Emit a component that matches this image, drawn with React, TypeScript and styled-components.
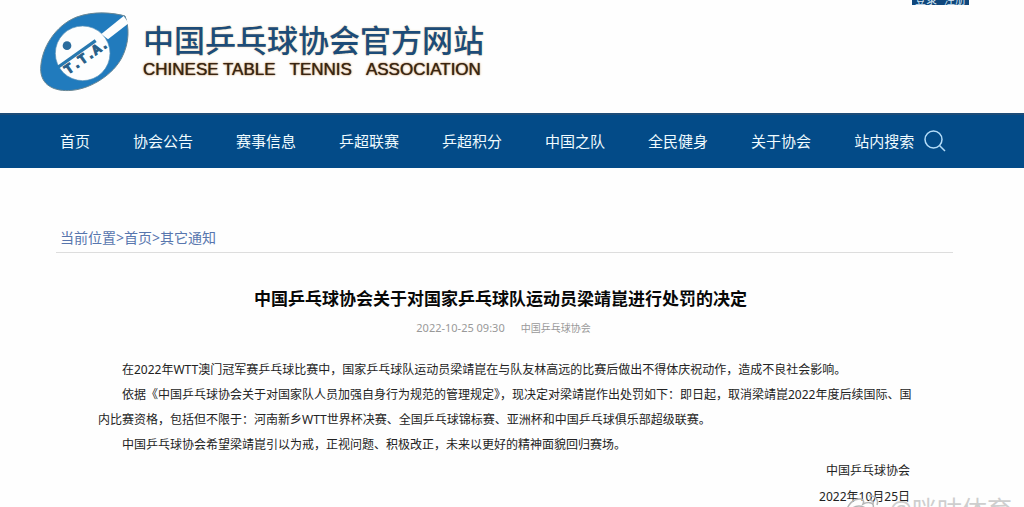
import React from "react";
import styled, { createGlobalStyle } from "styled-components";

const Global = createGlobalStyle`
  * { box-sizing: border-box; }
  body {
    margin: 0;
    background: #fefefe;
    color: #222;
    font-family: "Noto Sans", "Noto Sans CJK SC", sans-serif;
  }
  a { color: inherit; text-decoration: none; }
`;

const Page = styled.div`
  position: relative;
  height: 100vh;
  overflow: hidden;
`;

const Header = styled.header`
  display: flex;
  justify-content: space-between;
  align-items: flex-start;
  height: 113px;
  padding: 0 55px 0 38px;
`;

const Brand = styled.a`
  display: flex;
  gap: 14px;
  padding-top: 11px;
`;

const BrandText = styled.div`
  display: flex;
  flex-direction: column;
  gap: 3px;
  padding-top: 11px;
`;

const BrandName = styled.span`
  font: 500 31px/34px "Noto Sans CJK SC", sans-serif;
  color: #1d4c78;
  text-shadow: 0 0 2px #e8cfa0;
`;

const BrandLatin = styled.span`
  display: flex;
  gap: 14px;
  font: 17px/22px "Liberation Sans", sans-serif;
  color: #3a2410;
  text-shadow: 0 0 1px #3a2410, 0 0 3px #f2b880;
`;

const Account = styled.div`
  display: flex;
  gap: 7px;
  height: 5px;
  padding: 0 3px;
  overflow: hidden;
  background: #10477c;
  color: #d5e6f4;
  font-size: 11px;
  line-height: 16px;
  a { margin-top: -8px; }
`;

const Nav = styled.nav`
  display: flex;
  align-items: center;
  gap: 43px;
  height: 55px;
  padding: 0 60px 2px;
  background: #034b88;
  border-top: 2px solid #1d4c78;
  color: #f0fbff;
  font-size: 15px;
  line-height: 24px;
  white-space: nowrap;
`;

const SearchGroup = styled.div`
  display: flex;
  align-items: center;
  gap: 10px;
`;

const SearchButton = styled.button`
  display: flex;
  padding: 0;
  border: 0;
  background: none;
  color: #b4dcf8;
`;

const Main = styled.main`
  padding: 56px 71px 0 56px;
`;

const Breadcrumb = styled.div`
  padding: 3px 4px 4px;
  border-bottom: 1px solid #ddd;
  color: #5876ae;
  font-size: 14px;
  line-height: 21px;
`;

const Article = styled.article`
  padding: 34px 34px 0 42px;
`;

const Heading = styled.header`
  padding-right: 16px;
`;

const Title = styled.h1`
  margin: 0;
  color: #080808;
  text-align: center;
  font-size: 17px;
  line-height: 24px;
`;

const Meta = styled.div`
  display: flex;
  justify-content: center;
  align-items: center;
  gap: 16px;
  padding: 9px 0 0 6px;
  color: #999;
  font-size: 10px;
  line-height: 16px;
  time { font-size: 11px; }
`;

const Body = styled.div`
  padding-top: 21px;
  font-size: 12px;
  line-height: 25px;
`;

const Paragraph = styled.p`
  margin: 0;
  text-indent: 24px;
`;

const Signature = styled.p`
  margin: 1px 0 0;
  padding-right: 9px;
  text-align: right;
`;

const Watermark = styled.div`
  position: absolute;
  right: 12px;
  bottom: -20px;
  display: flex;
  align-items: center;
  gap: 8px;
  color: #cecece;
  font-size: 25px;
  line-height: 36px;
`;

const links = ["首页", "协会公告", "赛事信息", "乒超联赛", "乒超积分", "中国之队", "全民健身", "关于协会"];

function Logo() {
  return (
    <svg width="91" height="82" viewBox="54 33 273 246" aria-hidden="true">
      <path
        d="M62 205C64 145 105 77 170 51C220 33 275 37 315 48C328 80 329 128 305 174C280 221 218 265 156 271C102 276 61 255 62 205Z"
        fill="#217bbd"
        stroke="#6a8794"
        strokeWidth="3"
      />
      <circle cx="188" cy="160" r="82" fill="#fdfefe" stroke="#5b93b8" strokeWidth="2" />
      <path d="M244 102L311 48L326 70L264 118Z" fill="#fdfefe" />
      <circle cx="141" cy="137" r="13" fill="#2b6c9d" />
      <path d="M115 201L227 122" stroke="#2879b0" strokeWidth="10" />
      <text
        transform="translate(144 224) rotate(-35)"
        fontFamily="Liberation Mono"
        fontWeight="700"
        fontSize="42"
        fill="#285f89"
        stroke="#285f89"
        strokeWidth="3"
      >
        T.T.A.
      </text>
    </svg>
  );
}

export default function App() {
  return (
    <Page>
      <Global />
      <Header>
        <Brand href="#">
          <Logo />
          <BrandText>
            <BrandName>中国乒乓球协会官方网站</BrandName>
            <BrandLatin>
              <span>CHINESE TABLE</span>
              <span>TENNIS</span>
              <span>ASSOCIATION</span>
            </BrandLatin>
          </BrandText>
        </Brand>
        <Account>
          <a href="#">登录</a>
          <a href="#">注册</a>
        </Account>
      </Header>
      <Nav>
        {links.map((label) => (
          <a href="#" key={label}>{label}</a>
        ))}
        <SearchGroup>
          <a href="#">站内搜索</a>
          <SearchButton aria-label="搜索">
            <svg width="22" height="22" viewBox="0 0 22 22" fill="none" stroke="currentColor" strokeWidth="1.5">
              <circle cx="9.5" cy="9.5" r="8.5" />
              <path d="M15.5 15.5L21 21" />
            </svg>
          </SearchButton>
        </SearchGroup>
      </Nav>
      <Main>
        <Breadcrumb>
          当前位置&gt;<a href="#">首页</a>&gt;<a href="#">其它通知</a>
        </Breadcrumb>
        <Article>
          <Heading>
            <Title>中国乒乓球协会关于对国家乒乓球队运动员梁靖崑进行处罚的决定</Title>
            <Meta>
              <time>2022-10-25 09:30</time>
              <span>中国乒乓球协会</span>
            </Meta>
          </Heading>
          <Body>
            <Paragraph>
              在2022年WTT澳门冠军赛乒乓球比赛中，国家乒乓球队运动员梁靖崑在与队友林高远的比赛后做出不得体庆祝动作，造成不良社会影响。
            </Paragraph>
            <Paragraph>
              依据《中国乒乓球协会关于对国家队人员加强自身行为规范的管理规定》，现决定对梁靖崑作出处罚如下：即日起，取消梁靖崑2022年度后续国际、国内比赛资格，包括但不限于：河南新乡WTT世界杯决赛、全国乒乓球锦标赛、亚洲杯和中国乒乓球俱乐部超级联赛。
            </Paragraph>
            <Paragraph>
              中国乒乓球协会希望梁靖崑引以为戒，正视问题、积极改正，未来以更好的精神面貌回归赛场。
            </Paragraph>
            <Signature>中国乒乓球协会</Signature>
            <Signature>2022年10月25日</Signature>
          </Body>
        </Article>
      </Main>
      <Watermark>
        <svg width="38" height="34" viewBox="0 0 38 34" fill="none" stroke="#b5b5b5" strokeWidth="1.5" aria-hidden="true">
          <path d="M2 22C3 12 10 6 17 7C20 8 20 10 19 12C25 9 31 11 29 16C34 18 34 26 27 29C17 34 3 31 2 22Z" />
          <ellipse cx="15" cy="21" rx="9" ry="7" />
          <path d="M25 4C31 3 35 8 33 13M25 8C28 8 30 10 29 12" />
        </svg>
        <span>@咪咕体育</span>
      </Watermark>
    </Page>
  );
}
